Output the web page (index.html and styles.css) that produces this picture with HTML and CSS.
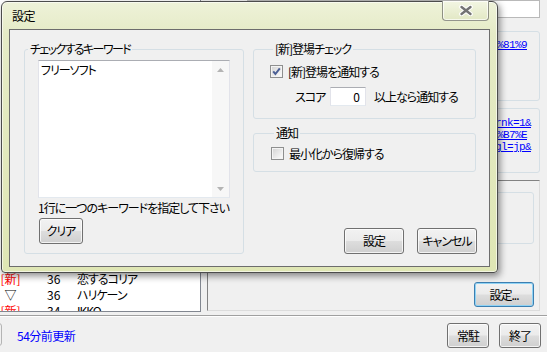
FILE: index.html
```html
<!DOCTYPE html>
<html lang="ja">

<head>
    <meta charset="UTF-8">
    <meta name="viewport" content="width=device-width, initial-scale=1.0">
    <title>設定</title>

    <link rel="stylesheet" href="styles.css">
</head>

<body>

    <div class="app">
        <div class="main">
            <div class="ranking">
                <div class="rank-list">
                    <div class="rank-row"><span class="rank-mark">▽</span><span class="rank-score">98</span><span class="rank-title">天気予報</span></div>
                    <div class="rank-row"><span class="rank-mark new">[新]</span><span class="rank-score">91</span><span class="rank-title">ワールドカップ</span></div>
                    <div class="rank-row"><span class="rank-mark">△</span><span class="rank-score">85</span><span class="rank-title">地震速報</span></div>
                    <div class="rank-row"><span class="rank-mark new">[新]</span><span class="rank-score">80</span><span class="rank-title">新型スマホ</span></div>
                    <div class="rank-row"><span class="rank-mark">▽</span><span class="rank-score">74</span><span class="rank-title">高校野球</span></div>
                    <div class="rank-row"><span class="rank-mark">△</span><span class="rank-score">70</span><span class="rank-title">宝くじ</span></div>
                    <div class="rank-row"><span class="rank-mark">▽</span><span class="rank-score">66</span><span class="rank-title">花火大会</span></div>
                    <div class="rank-row"><span class="rank-mark new">[新]</span><span class="rank-score">61</span><span class="rank-title">映画ランキング</span></div>
                    <div class="rank-row"><span class="rank-mark new">[新]</span><span class="rank-score">58</span><span class="rank-title">株価</span></div>
                    <div class="rank-row"><span class="rank-mark new">[新]</span><span class="rank-score">55</span><span class="rank-title">台風情報</span></div>
                    <div class="rank-row"><span class="rank-mark">▽</span><span class="rank-score">52</span><span class="rank-title">ドラマ</span></div>
                    <div class="rank-row"><span class="rank-mark new">[新]</span><span class="rank-score">49</span><span class="rank-title">新曲</span></div>
                    <div class="rank-row"><span class="rank-mark new">[新]</span><span class="rank-score">46</span><span class="rank-title">レシピ</span></div>
                    <div class="rank-row"><span class="rank-mark">△</span><span class="rank-score">44</span><span class="rank-title">時刻表</span></div>
                    <div class="rank-row"><span class="rank-mark">▽</span><span class="rank-score">41</span><span class="rank-title">温泉</span></div>
                    <div class="rank-row"><span class="rank-mark">▽</span><span class="rank-score">38</span><span class="rank-title">占い</span></div>
                    <div class="rank-row"><span class="rank-mark new">[新]</span><span class="rank-score">36</span><span class="rank-title">恋するコリア</span></div>
                    <div class="rank-row"><span class="rank-mark">▽</span><span class="rank-score">36</span><span class="rank-title">ハリケーン</span></div>
                    <div class="rank-row"><span class="rank-mark new">[新]</span><span class="rank-score">34</span><span class="rank-title">IKKO</span></div>
                </div>
            </div>

            <div class="detail">
                <div class="query"></div>
                <div class="group url-group">
                    <a class="link" href="#">q=%E3%83%95%E3%83%AA%E3%83%BC%81%9</a>
                </div>
                <div class="group link-group">
                    <a class="link" href="#">search?hl=ja&amp;rnk=1&amp;</a>
                    <a class="link short" href="#">q=%E3%82%BD%B7%E</a>
                    <a class="link" href="#">ie=UTF-8&amp;gl=jp&amp;</a>
                </div>
                <div class="frame">
                    <div class="group frame-group"></div>
                    <button class="btn btn-default">設定...</button>
                </div>
            </div>
        </div>

        <div class="status">
            <div class="status-box"></div>
            <span class="updated">54分前更新</span>
            <button class="btn status-btn stay">常駐</button>
            <button class="btn status-btn">終了</button>
        </div>
    </div>

    <div class="dialog">
        <div class="caption">
            <span class="caption-text">設定</span>
            <button class="close">
                <svg width="14" height="11" viewBox="0 0 14 11">
                    <path d="M2.5 2 L11.5 9 M11.5 2 L2.5 9" stroke="#fff" stroke-width="4.6" stroke-linecap="round" />
                    <path d="M2.5 2 L11.5 9 M11.5 2 L2.5 9" stroke="#737373" stroke-width="2.4" stroke-linecap="round" />
                </svg>
            </button>
        </div>

        <div class="client">
            <fieldset class="group keywords">
                <legend>チェックするキーワード</legend>
                <div class="memo">
                    <div class="memo-text">フリーソフト</div>
                    <div class="memo-scroll">
                        <svg width="7" height="4" viewBox="0 0 7 4"><path d="M3.5 0 L7 4 L0 4 Z" fill="#b4b4b4" /></svg>
                        <svg width="7" height="4" viewBox="0 0 7 4"><path d="M0 0 L7 0 L3.5 4 Z" fill="#b4b4b4" /></svg>
                    </div>
                </div>
                <div class="hint">1行に一つのキーワードを指定して下さい</div>
                <button class="btn btn-clear">クリア</button>
            </fieldset>

            <div class="side">
                <fieldset class="group new-check">
                    <legend>[新]登場チェック</legend>
                    <label class="check">
                        <svg class="box" width="13" height="13" viewBox="0 0 13 13">
                            <defs>
                                <linearGradient id="boxfill" x1="0" y1="0" x2="1" y2="1">
                                    <stop offset="0" stop-color="#d6d6d6" />
                                    <stop offset="1" stop-color="#fafafa" />
                                </linearGradient>
                            </defs>
                            <rect x="0.5" y="0.5" width="12" height="12" fill="#f4f4f4" stroke="#8e8f8f" />
                            <rect x="2" y="2" width="9" height="9" fill="url(#boxfill)" />
                            <path d="M3.2 6.4 L5.4 9 L9.8 3.4" fill="none" stroke="#4b5f95" stroke-width="2" />
                        </svg>
                        [新]登場を通知する
                    </label>
                    <div class="score-row">
                        <span class="score-label">スコア</span>
                        <span class="score-input">0</span>
                        <span class="score-text">以上なら通知する</span>
                    </div>
                </fieldset>

                <fieldset class="group notify">
                    <legend>通知</legend>
                    <label class="check">
                        <svg class="box" width="13" height="13" viewBox="0 0 13 13">
                            <rect x="0.5" y="0.5" width="12" height="12" fill="#f4f4f4" stroke="#8e8f8f" />
                            <rect x="2" y="2" width="9" height="9" fill="url(#boxfill)" />
                        </svg>
                        最小化から復帰する
                    </label>
                </fieldset>

                <div class="actions">
                    <button class="btn btn-action">設定</button>
                    <button class="btn btn-action">キャンセル</button>
                </div>
            </div>
        </div>
    </div>

</body>

</html>
```

FILE: styles.css
```css
* {
    box-sizing: border-box;
}

body {
    margin: 0;
    width: 547px;
    height: 352px;
    overflow: hidden;
    position: relative;
    background: #f0f0f0;
    font-family: "Noto Sans CJK JP", sans-serif;
    font-size: 12px;
    font-feature-settings: "palt" 1;
    letter-spacing: -1px;
    color: #000;
}

button {
    font: inherit;
    color: inherit;
    letter-spacing: inherit;
    padding: 0;
}

/* Windows 7 style push button */
.btn {
    border: 1px solid #707070;
    border-radius: 3px;
    background: linear-gradient(#f2f2f2 0%, #ebebeb 48%, #dddddd 52%, #cfcfcf 100%);
    box-shadow: inset 0 0 0 1px rgba(255, 255, 255, 0.75);
    line-height: 1;
}

.group {
    border: 1px solid #d5dfe5;
    border-radius: 3px;
}

/* ---- main window behind the dialog ---- */

.app {
    display: flex;
    flex-direction: column;
    height: 352px;
}

.main {
    display: flex;
    align-items: flex-start;
    height: 312px;
}

.ranking {
    width: 201px;
    height: 312px;
    background: #fff;
    border-right: 1px solid #828790;
    border-bottom: 1px solid #828790;
    overflow: hidden;
}

.rank-list {
    padding-top: 15px;
}

.rank-row {
    display: flex;
    height: 16px;
    line-height: 16px;
    white-space: nowrap;
}

.rank-row span {
    flex: none;
}

.rank-mark {
    width: 21px;
    text-align: center;
    letter-spacing: 0;
}

.rank-mark.new {
    color: #f00;
}

.rank-score {
    width: 30px;
    margin-left: 26px;
    letter-spacing: 0;
}

.detail {
    display: flex;
    flex-direction: column;
    width: 333px;
    height: 311px;
    margin-left: 6px;
}

.query {
    height: 18px;
    margin-left: 40px;
    background: #fff;
    border: 1px solid #b9b9b9;
}

.url-group {
    height: 70px;
    margin: 13px 0 0 8px;
    padding: 7px 12px 0 0;
    text-align: right;
}

.link-group {
    height: 65px;
    margin: 7px 0 0 8px;
    padding: 8px 8px 0 0;
    text-align: right;
}

.link {
    display: block;
    color: #00f;
    font-family: "Liberation Mono", monospace;
    font-size: 11px;
    letter-spacing: -0.6px;
    line-height: 12px;
    white-space: nowrap;
}

.link.short {
    padding-right: 4px;
}

.frame {
    flex: 1;
    margin-top: 7px;
    display: flex;
    flex-direction: column;
    align-items: flex-end;
    border: 1px solid;
    border-color: #828282 #dcdcdc #dcdcdc #828282;
}

.frame-group {
    width: 200px;
    height: 52px;
    margin: 11px 5px 0 0;
}

.btn-default {
    width: 60px;
    height: 25px;
    margin: auto 5px 3px 0;
    border-color: #3c7fb1;
    box-shadow: inset 0 0 0 1px #8fd3f5;
}

.status {
    flex: 1;
    display: flex;
    align-items: flex-start;
    margin-top: 3px;
    padding-top: 7px;
    border-top: 1px solid #a0a0a0;
    box-shadow: inset 0 1px #fff;
}

.status-box {
    width: 12px;
    height: 23px;
    margin-left: -10px;
    border: 1px solid #b4b4b4;
    border-radius: 3px;
}

.updated {
    margin-left: 15px;
    color: #00f;
    line-height: 25px;
    letter-spacing: -0.5px;
}

.status-btn {
    width: 42px;
    height: 25px;
    margin: 0 6px 0 10px;
}

.status-btn.stay {
    margin: 0 0 0 auto;
}

/* ---- settings dialog ---- */

.dialog {
    position: absolute;
    left: 1px;
    top: 1px;
    width: 497px;
    height: 272px;
    padding: 0 7px 5px;
    display: flex;
    flex-direction: column;
    border: 1px solid #4c4c4c;
    border-radius: 6px 6px 4px 4px;
    background: linear-gradient(#eef2d9 0%, #e5ebc6 12%, #dfe6b4 100%);
    box-shadow: 2px 3px 7px rgba(0, 0, 0, 0.45), inset 0 0 0 1px rgba(255, 255, 255, 0.6);
}

.caption {
    height: 27px;
    margin: 0 -7px;
    padding-left: 10px;
    display: flex;
    align-items: flex-start;
}

.caption-text {
    line-height: 27px;
    letter-spacing: -0.5px;
}

.close {
    width: 47px;
    height: 20px;
    margin: -1px 8px 0 auto;
    display: flex;
    align-items: center;
    justify-content: center;
    border: 1px solid rgba(70, 70, 70, 0.55);
    border-top: none;
    border-radius: 0 0 4px 4px;
    background: linear-gradient(#f3f6e4, #e2e8c4);
    box-shadow: inset 0 0 0 1px rgba(255, 255, 255, 0.7);
}

.client {
    width: 481px;
    height: 238px;
    padding: 12px 0 12px 14px;
    display: flex;
    border: 1px solid #6d6d6d;
    background: #f0f0f0;
}

fieldset {
    margin: 0;
    padding: 0;
    min-inline-size: 0;
}

legend {
    margin-left: 3px;
    padding: 0 2px;
    line-height: 14px;
}

.keywords {
    width: 220px;
    height: 212px;
}

.keywords legend {
    letter-spacing: -1.6px;
}

.memo {
    display: flex;
    width: 192px;
    height: 138px;
    margin: 4px 0 0 13px;
    background: #fff;
    border: 1px solid;
    border-color: #abadb3 #e2e3ea #e3e9ef #e2e3ea;
}

.memo-text {
    flex: 1;
    padding: 2px 0 0 2px;
    line-height: 14px;
}

.memo-scroll {
    width: 17px;
    display: flex;
    flex-direction: column;
    justify-content: space-between;
    align-items: center;
    padding: 7px 0 6px;
    background: #f7f7f7;
}

.hint {
    margin: 3px 0 0 13px;
    line-height: 14px;
    white-space: nowrap;
}

.btn-clear {
    width: 44px;
    height: 26px;
    margin: 3px 0 0 14px;
}

.side {
    width: 224px;
    margin-left: 9px;
    display: flex;
    flex-direction: column;
}

.new-check {
    width: 223px;
    height: 77px;
    padding-left: 16px;
}

.notify {
    width: 223px;
    height: 46px;
    margin-top: 7px;
    padding-left: 17px;
}

.check {
    display: flex;
    align-items: center;
    gap: 5px;
    height: 13px;
    margin-top: 9px;
    line-height: 14px;
}

.notify .check {
    margin-top: 7px;
}

.box {
    flex: none;
}

.score-row {
    display: flex;
    align-items: center;
    height: 19px;
    margin: 9px 0 0 25px;
}

.score-label {
    width: 35px;
}

.score-input {
    width: 36px;
    height: 19px;
    padding-right: 6px;
    text-align: right;
    line-height: 17px;
    background: #fff;
    border: 1px solid;
    border-color: #abadb3 #e2e3ea #e3e9ef #e2e3ea;
}

.score-text {
    margin-left: 8px;
}

.actions {
    margin-top: auto;
    display: flex;
    justify-content: flex-end;
    gap: 13px;
}

.btn-action {
    width: 60px;
    height: 26px;
}
```
